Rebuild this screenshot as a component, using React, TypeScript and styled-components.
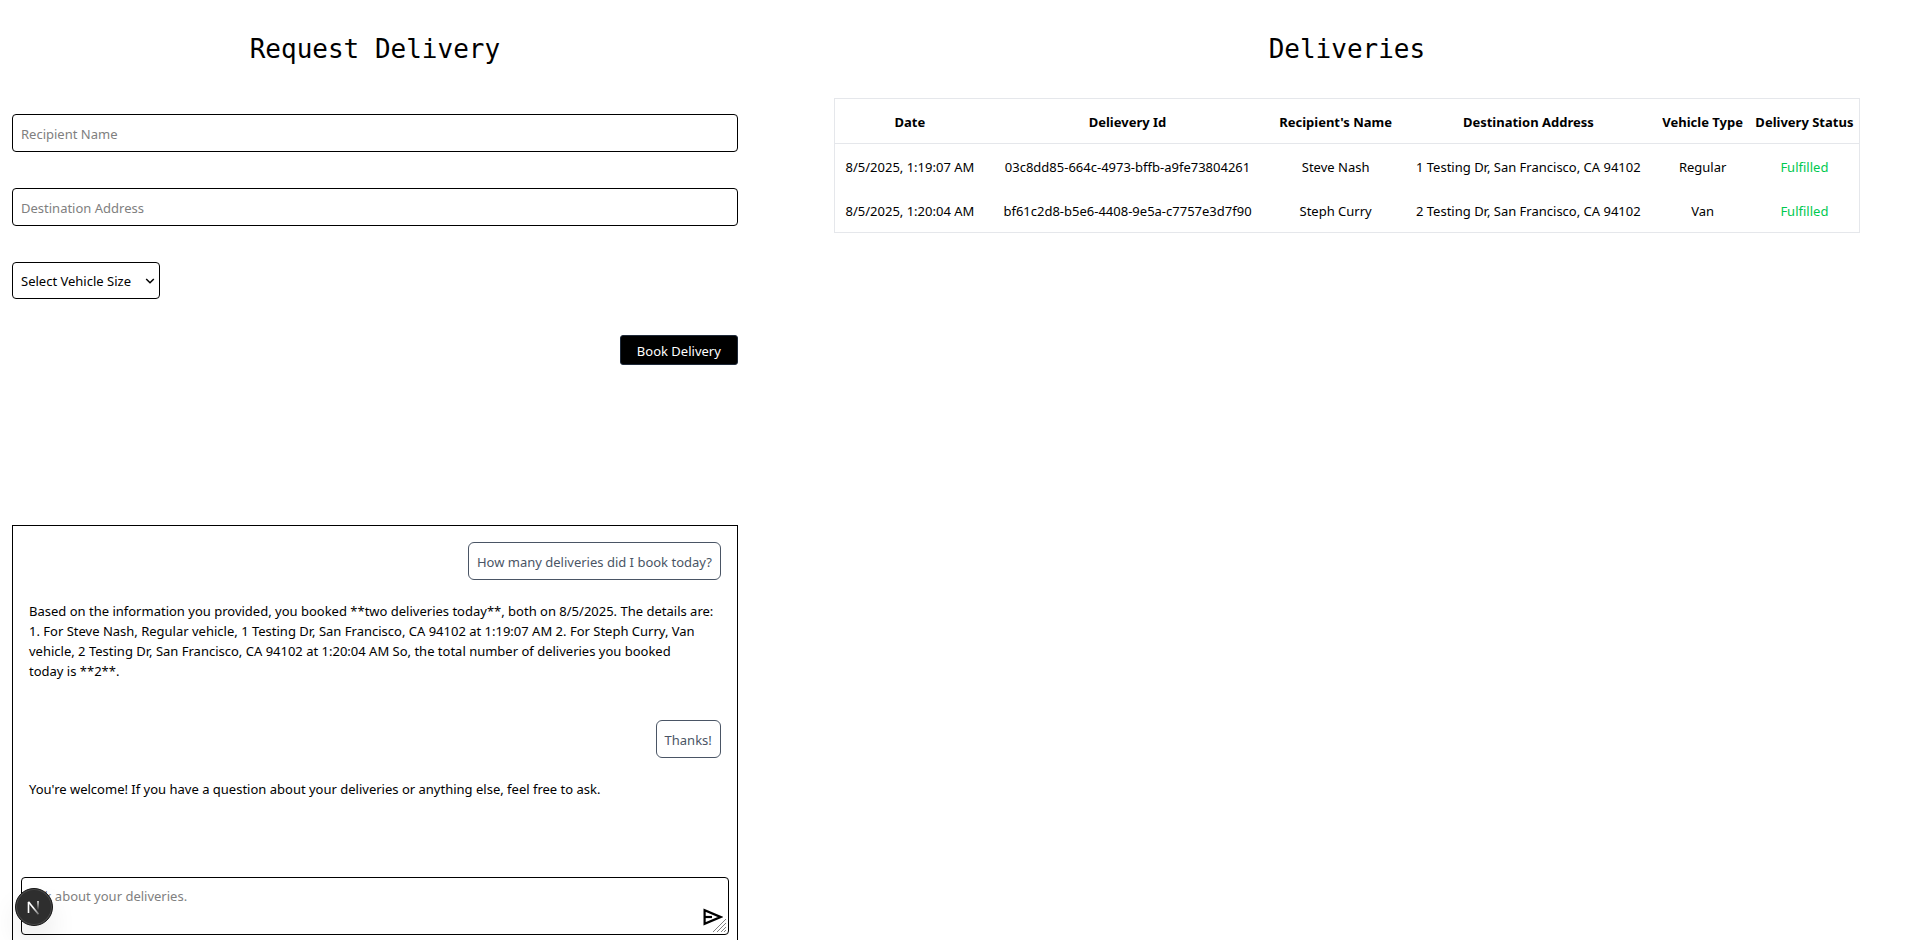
import React from "react";
import styled, { createGlobalStyle } from "styled-components";

const GlobalStyle = createGlobalStyle`
  * { box-sizing: border-box; }
  body {
    margin: 0;
    height: 100vh;
    overflow: hidden;
    background: #fff;
    color: #000;
    font: 13px/20px "Noto Sans", sans-serif;
  }
  input, select, textarea, button { font: inherit; color: inherit; }
  h1, p { margin: 0; }
`;

const Page = styled.main`
  display: grid;
  grid-template-columns: 29fr 41fr;
  column-gap: 96px;
  align-items: start;
  padding: 29px 53px 0 12px;
`;

const Column = styled.section`
  display: flex;
  flex-direction: column;
  min-width: 0;
`;

const Title = styled.h1`
  font: 400 26px/40px "DejaVu Sans Mono", monospace;
  text-align: center;
`;

const Form = styled.form`
  display: flex;
  flex-direction: column;
  align-items: flex-start;
  gap: 36px;
  margin-top: 45px;
`;

const TextField = styled.input`
  width: 100%;
  height: 38px;
  padding: 2px 8px 0;
  border: 1px solid #000;
  border-radius: 4px;
  background: #fff;
  &::placeholder { color: #808080; opacity: 1; }
`;

const SelectBox = styled.div`
  position: relative;
  display: flex;
`;

const VehicleSelect = styled.select`
  width: 148px;
  height: 37px;
  padding: 0 24px 0 8px;
  border: 1px solid #000;
  border-radius: 4px;
  background: #fff;
  appearance: none;
`;

const SelectArrow = styled.svg`
  position: absolute;
  right: 5px;
  top: 15px;
  pointer-events: none;
`;

const BookButton = styled.button`
  align-self: flex-end;
  width: 118px;
  height: 30px;
  padding: 2px 0 0;
  border: 1px solid #1e2939;
  border-radius: 3px;
  background: #000;
  color: #fff;
`;

const Chat = styled.div`
  display: flex;
  flex-direction: column;
  margin-top: 160px;
  padding: 16px 8px 8px;
  border: 1px solid #000;
`;

const Messages = styled.div`
  display: flex;
  flex-direction: column;
  padding: 0 8px 78px;
`;

const Question = styled.p`
  align-self: flex-end;
  padding: 9px 8px 7px;
  border: 1px solid #4a5565;
  border-radius: 6px;
  color: #4a5565;
`;

const Answer = styled.p`
  padding: 21px 0 39px;
  &:last-child { padding-bottom: 0; }
`;

const Composer = styled.div`
  position: relative;
  display: flex;
`;

const Prompt = styled.textarea`
  width: 100%;
  height: 58px;
  padding: 8px;
  border: 1px solid #000;
  border-radius: 4px;
  background: #fff;
  resize: vertical;
  &::placeholder { color: #808080; opacity: 1; }
  &::-webkit-resizer { background: transparent; }
`;

const ResizeGrip = styled.svg`
  position: absolute;
  right: 2px;
  bottom: 2px;
  pointer-events: none;
`;

const SendButton = styled.button`
  position: absolute;
  right: 6px;
  bottom: 9px;
  display: flex;
  padding: 0;
  border: 0;
  background: none;
`;

const Deliveries = styled.table`
  width: 100%;
  margin-top: 29px;
  table-layout: fixed;
  border-collapse: collapse;
  border: 1px solid #e5e7eb;
  text-align: center;
  white-space: nowrap;
  thead tr { border-bottom: 1px solid #e5e7eb; }
`;

const Col = styled.col<{ $share: number }>`
  width: ${(p) => p.$share}%;
`;

const HeadCell = styled.th`
  height: 45px;
  padding: 2px 0 0;
  font-weight: 700;
`;

const Cell = styled.td<{ $done?: boolean }>`
  height: 44px;
  padding: 3px 0 0;
  color: ${(p) => (p.$done ? "#00c950" : "inherit")};
  tr:last-child > & { height: 45px; }
`;

const DevBadge = styled.button`
  position: fixed;
  left: 15px;
  bottom: 14px;
  display: flex;
  align-items: center;
  justify-content: center;
  width: 38px;
  height: 38px;
  padding: 0;
  border: 1px solid #171717;
  border-radius: 50%;
  background: #2e2e2e;
  box-shadow: inset 0 0 0 1px #4a4a4a, 0 16px 32px -8px rgba(0, 0, 0, 0.24);
`;

const columns = [
  { label: "Date", share: 14.7 },
  { label: "Delievery Id", share: 27.8 },
  { label: "Recipient's Name", share: 12.8 },
  { label: "Destination Address", share: 24.8 },
  { label: "Vehicle Type", share: 9.2 },
  { label: "Delivery Status", share: 10.7 },
];

const deliveries = [
  ["8/5/2025, 1:19:07 AM", "03c8dd85-664c-4973-bffb-a9fe73804261", "Steve Nash", "1 Testing Dr, San Francisco, CA 94102", "Regular", "Fulfilled"],
  ["8/5/2025, 1:20:04 AM", "bf61c2d8-b5e6-4408-9e5a-c7757e3d7f90", "Steph Curry", "2 Testing Dr, San Francisco, CA 94102", "Van", "Fulfilled"],
];

const SendIcon = () => (
  <svg width="20" height="18" viewBox="0 0 20 18" fill="none" stroke="#000" strokeWidth="2.2" aria-hidden="true">
    <path d="M1.6 2.2V15.8L17.5 9Z" />
    <path d="M2 9H9" />
  </svg>
);

const NextMark = () => (
  <svg width="14" height="16" viewBox="0 0 14 16" fill="none" aria-hidden="true">
    <defs>
      <linearGradient id="diagonal" x1="7" y1="8" x2="13" y2="16" gradientUnits="userSpaceOnUse">
        <stop stopColor="#fff" />
        <stop offset="1" stopColor="#fff" stopOpacity="0.2" />
      </linearGradient>
      <linearGradient id="stem" x1="11" y1="2" x2="11" y2="11" gradientUnits="userSpaceOnUse">
        <stop stopColor="#fff" />
        <stop offset="1" stopColor="#fff" stopOpacity="0" />
      </linearGradient>
    </defs>
    <path d="M1.5 14V3" stroke="#fff" strokeWidth="1.6" />
    <path d="M1.4 2.8L11.5 15.2" stroke="url(#diagonal)" strokeWidth="1.7" />
    <path d="M11 2V11" stroke="url(#stem)" strokeWidth="1.5" />
  </svg>
);

export default function App() {
  return (
    <>
      <GlobalStyle />
      <Page>
        <Column>
          <Title>Request Delivery</Title>
          <Form onSubmit={(e) => e.preventDefault()}>
            <TextField type="text" placeholder="Recipient Name" aria-label="Recipient Name" />
            <TextField type="text" placeholder="Destination Address" aria-label="Destination Address" />
            <SelectBox>
              <VehicleSelect aria-label="Vehicle size" defaultValue="">
                <option value="">Select Vehicle Size</option>
                <option value="regular">Regular</option>
                <option value="van">Van</option>
              </VehicleSelect>
              <SelectArrow width="10" height="8" viewBox="0 0 10 8" fill="none" stroke="#000" strokeWidth="1.5" aria-hidden="true">
                <path d="M1.2 2L5 5.8L8.8 2" />
              </SelectArrow>
            </SelectBox>
            <BookButton type="submit">Book Delivery</BookButton>
          </Form>
          <Chat>
            <Messages>
              <Question>How many deliveries did I book today?</Question>
              <Answer>
                Based on the information you provided, you booked **two deliveries today**, both on 8/5/2025. The
                details are: 1. For Steve Nash, Regular vehicle, 1 Testing Dr, San Francisco, CA 94102 at 1:19:07 AM 2.
                For Steph Curry, Van vehicle, 2 Testing Dr, San Francisco, CA 94102 at 1:20:04 AM So, the total number
                of deliveries you booked today&nbsp;is **2**.
              </Answer>
              <Question>Thanks!</Question>
              <Answer>
                You're welcome! If you have a question about your deliveries or anything else, feel free to ask.
              </Answer>
            </Messages>
            <Composer>
              <Prompt placeholder="Ask about your deliveries." aria-label="Ask about your deliveries" />
              <SendButton type="button" aria-label="Send">
                <SendIcon />
              </SendButton>
              <ResizeGrip width="15" height="15" viewBox="0 0 15 15" stroke="#808080" strokeWidth="1" aria-hidden="true">
                <path d="M1 14L14 1M5 14L14 5M9 14L14 9M12 14L14 12" />
              </ResizeGrip>
            </Composer>
          </Chat>
        </Column>
        <Column>
          <Title>Deliveries</Title>
          <Deliveries>
            <colgroup>
              {columns.map((c) => (
                <Col key={c.label} $share={c.share} />
              ))}
            </colgroup>
            <thead>
              <tr>
                {columns.map((c) => (
                  <HeadCell key={c.label} scope="col">{c.label}</HeadCell>
                ))}
              </tr>
            </thead>
            <tbody>
              {deliveries.map((row) => (
                <tr key={row[1]}>
                  {row.map((value, i) => (
                    <Cell key={i} $done={value === "Fulfilled"}>{value}</Cell>
                  ))}
                </tr>
              ))}
            </tbody>
          </Deliveries>
        </Column>
      </Page>
      <DevBadge type="button" aria-label="Open developer tools">
        <NextMark />
      </DevBadge>
    </>
  );
}
